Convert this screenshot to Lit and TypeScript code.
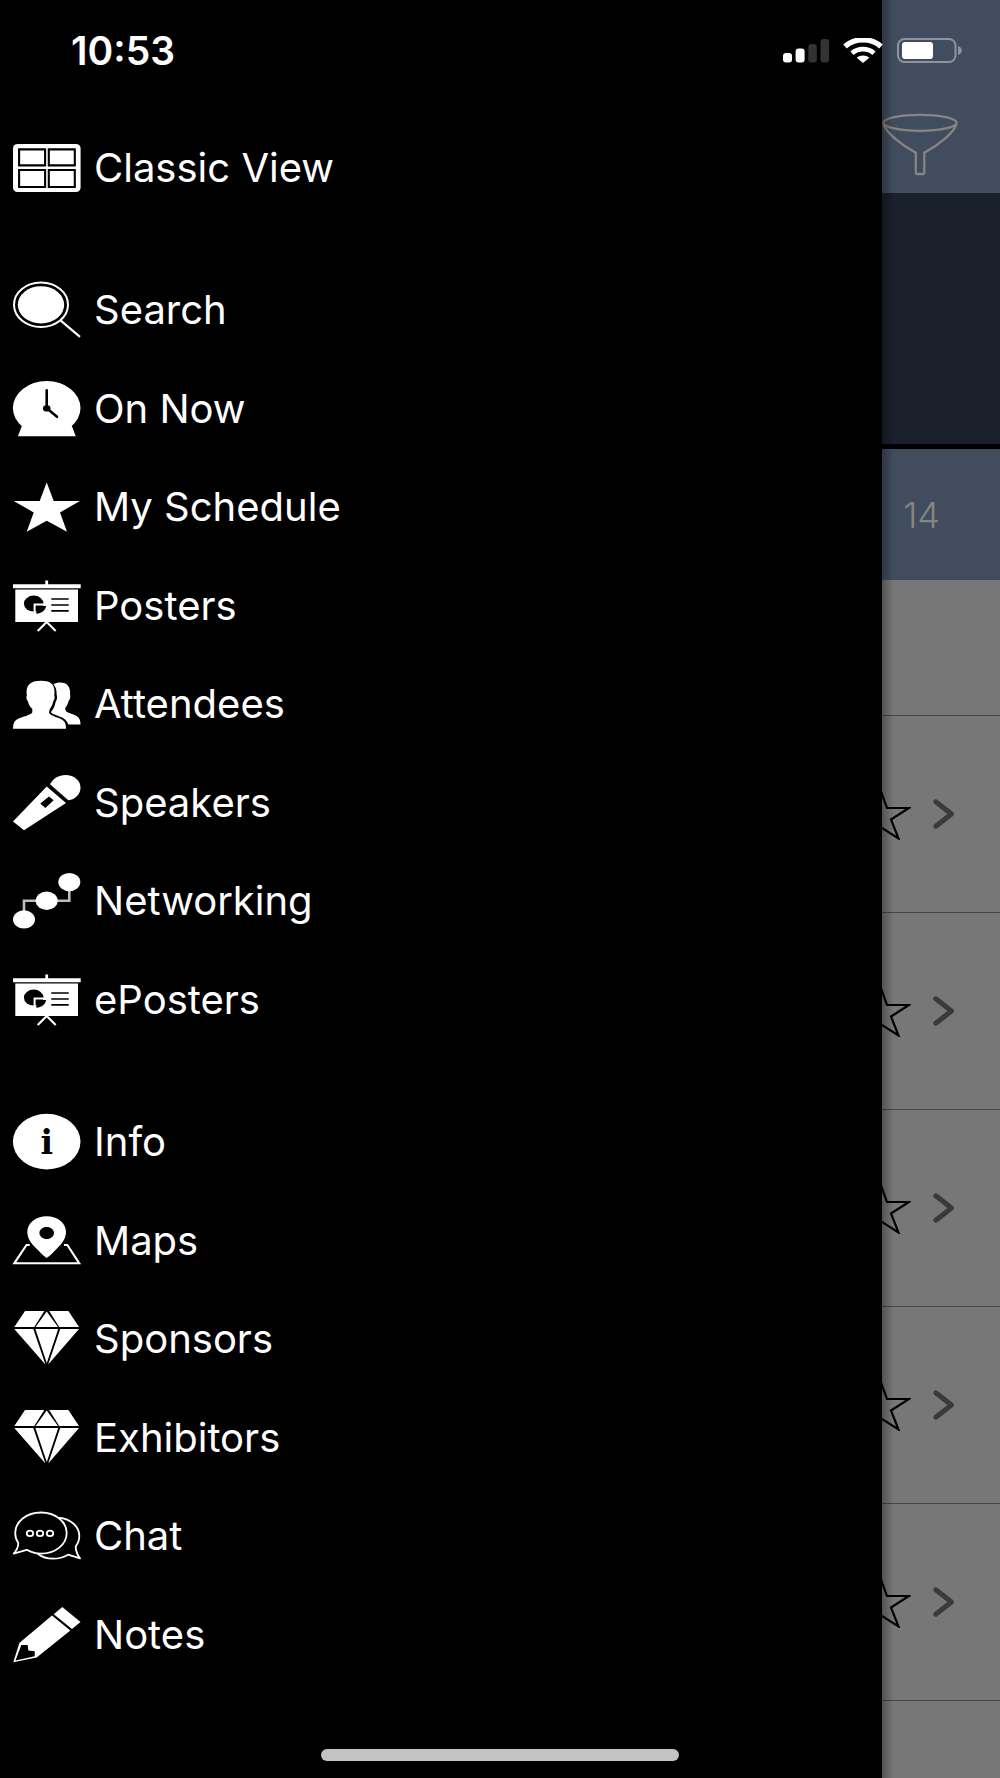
import { LitElement, html, css, svg, SVGTemplateResult } from "lit";
import { customElement, property } from "lit/decorators.js";

const poster = svg`
  <path d="M32.3 2.6h2.8v3.6h32.6v4H0v-4h32.3z" />
  <path d="M2.3 11.6H65v32.3H2.3z" />
  <ellipse cx="20.7" cy="25.6" rx="9.8" ry="8" fill="#000" />
  <path d="M21.6 36.5V26.4h12" fill="none" stroke="#fff" stroke-width="2" />
  <path d="M23.3 28.1h9.8c-.6 4.4-4.6 7.5-9.8 7.7z" fill="#000" />
  <path d="M38.3 21h17.4M38.3 27h17.4M38.3 32.8h17.4" stroke="#000" stroke-width="1.7" />
  <path d="M24.7 53l9-9 9 9" fill="none" stroke="#fff" stroke-width="2.1" />
`;

const diamond = svg`
  <path d="M12 0h19.3l-10 16h-20zM33.7.5L45 16H22.6zM55.4 0H36.2l10 16H66z" />
  <path d="M1.3 18h19L32.4 53.6zM22.4 18h22.8L33.8 52zM66 18H47.2L35.2 53.6z" />
`;

const icons: Record<string, SVGTemplateResult> = {
  grid: svg`
    <rect x="0" y="4" width="67.6" height="48" rx="4.5" />
    <g fill="none" stroke="#000" stroke-width="2.1">
      <path d="M6.1 9.4h26v16h-26zM35.8 9.4h26v16h-26zM6.1 30h26v17h-26zM35.8 30h26v17h-26z" />
    </g>`,
  search: svg`
    <ellipse cx="28" cy="22.8" rx="27" ry="22.2" fill="none" stroke="#fff" stroke-width="2" />
    <ellipse cx="28" cy="22.8" rx="23.2" ry="18.6" />
    <path d="M47.5 38.4L67 54.8" stroke="#fff" stroke-width="2.2" />`,
  clock: svg`
    <ellipse cx="33.7" cy="27" rx="33.8" ry="27" />
    <path d="M8.7 45.2L5 55.2h57.7L59 45.2 34 30z" />
    <path d="M33.7 9.2v18L44 35.8" fill="none" stroke="#000" stroke-width="2.6" stroke-linecap="round" />
    <ellipse cx="33.7" cy="27.4" rx="3.8" ry="3.1" fill="#000" />`,
  star: svg`<path d="M33.7 3.4L40.7 22H67L47 33.4l7 19.3-20.3-10.9-20 10.9 7-19.3L.7 22h26z" />`,
  poster,
  people: svg`
    <path d="M0 52.7c0-7.7 3-9.4 9-11.4 6-2 10.3-3.4 10.3-5.3v-3c-2.3-2-3.8-5-4.5-8-1.3-1-1.8-4-1-5.5C12.5 9 17 4.8 28 4.8S42.5 9 41.3 19.5c.7 1.5.2 4.5-1 5.5-.6 3-1.8 6-3.5 8l-.8 3.5c.5 2 4 3.5 9 5.3 6 2.2 8 4.2 8 10.9z" />
    <path d="M40.5 8.3c2-1.4 4-1.9 6.500-1.900 7.500 0 10.700 4.600 10.100 12 .5 2.600 0 4.800-1.300 6.100-.8 3.300-2 5.700-3.600 7.500.1 3 1 3.800 4.800 5.200 7.500 2.600 10.500 4 10.500 11.300H55.300c-1.800-5-5.300-6.800-10-8.500-3.500-1.400-6.300-2.200-7.500-3.700 2.500-2.500 4.200-6.500 4.800-10.200 1.600-2.600 1.900-5.600 1-7.600.2-4-.9-7.600-3.100-10.200z" />`,
  mic: svg`
    <path d="M37 9.300C40 3.500 45.500 0 52.500 0c8.500 0 15 5.500 15 12.500 0 6.500-5 12-12.200 12.800z" />
    <path fill-rule="evenodd" d="M33.700 11.600L53 28 11 55.300 0 46.600zM36 21.600l-8.700 7 5 4.400 8.400-7.700z" />`,
  network: svg`
    <path d="M11 46V27.800h45.300V9" fill="none" stroke="#bdbdbd" stroke-width="2.6" />
    <ellipse cx="56.3" cy="9.1" rx="11" ry="9.2" />
    <ellipse cx="33.7" cy="27.800" rx="11" ry="9.2" />
    <ellipse cx="11" cy="46.4" rx="11" ry="9.2" />`,
  info: svg`
    <ellipse cx="33.7" cy="27.6" rx="33.8" ry="27.8" />
    <text class="mark" x="33.7" y="40" text-anchor="middle" fill="#000">i</text>`,
  map: svg`
    <path fill-rule="evenodd" d="M33.700 3.300C44.500 3.300 53 10 53 19c0 8.500-7 14.500-11 18.500-2.500 2.500-5 5.500-8.300 7.500-3.300-2-5.800-5-8.300-7.500-4-4-11.100-10-11.100-18.500 0-9 8.600-15.700 19.400-15.700zm0 10.700c-4 0-7.300 2.700-7.300 6s3.300 6 7.300 6 7.300-2.700 7.300-6-3.300-6-7.300-6z" />
    <path d="M16.700 32h-3.200L1.300 50.300h64.900L54.300 32H51" fill="none" stroke="#fff" stroke-width="2.1" />`,
  diamond,
  chat: svg`
    <g fill="none" stroke="#fff" stroke-width="1.8" stroke-linejoin="round">
      <path d="M5.300 35C3.200 32 2.200 28.500 2.200 25 2.200 13.500 13.500 4.500 28 4.500S53.700 13.500 53.700 25 42.500 45.600 28 45.600c-5.200 0-10-1.400-14.300-3.800L.7 45.600C3.500 42.500 5.300 39.500 5.300 35z" />
      <path d="M45.700 9.700C58 11 66.300 18.500 66.300 28c0 3.800-1.200 7.200-3.600 10.400 0 4.600 2 8.800 4.300 12L55 46.700c-4.500 2.700-9.500 4-15 4-5.800 0-11-1.600-15.300-5" />
      <ellipse cx="17" cy="25.4" rx="3.2" ry="2.7" />
      <ellipse cx="27" cy="25.4" rx="3.2" ry="2.7" />
      <ellipse cx="37" cy="25.4" rx="3.2" ry="2.7" />
    </g>`,
  pencil: svg`
    <path d="M49.300 0l18.200 15-8.500 7L40.700 7.300z" />
    <path fill-rule="evenodd" d="M39 8.600l18.300 15-33.600 27L.3 55.300 6.300 36zM8.300 38L2.500 53.500l19.200-4.200v-5l-6.400-.7-.6-5.600z" />`,
};

interface Entry {
  icon: string;
  label: string;
}

const groups: Entry[][] = [
  [{ icon: "grid", label: "Classic View" }],
  [
    { icon: "search", label: "Search" },
    { icon: "clock", label: "On Now" },
    { icon: "star", label: "My Schedule" },
    { icon: "poster", label: "Posters" },
    { icon: "people", label: "Attendees" },
    { icon: "mic", label: "Speakers" },
    { icon: "network", label: "Networking" },
    { icon: "poster", label: "ePosters" },
  ],
  [
    { icon: "info", label: "Info" },
    { icon: "map", label: "Maps" },
    { icon: "diamond", label: "Sponsors" },
    { icon: "diamond", label: "Exhibitors" },
    { icon: "chat", label: "Chat" },
    { icon: "pencil", label: "Notes" },
  ],
];

@customElement("menu-link")
class MenuLink extends LitElement {
  @property() icon = "";
  @property() label = "";

  static styles = css`
    :host {
      display: block;
    }
    .link {
      display: flex;
      align-items: center;
      gap: 13px;
      height: 100%;
      padding-left: 13px;
      color: #fff;
      font-size: 40px;
      line-height: 48px;
      text-decoration: none;
      white-space: nowrap;
    }
    .icon {
      flex: none;
      width: 68px;
      height: 56px;
      fill: #fff;
      overflow: visible;
    }
    .mark {
      font: bold 33px "DejaVu Serif", serif;
    }
  `;

  render() {
    return html`<a class="link" href="#">
      <svg class="icon" viewBox="0 0 68 56" aria-hidden="true">${icons[this.icon]}</svg>
      <span>${this.label}</span>
    </a>`;
  }
}

@customElement("status-bar")
class StatusBar extends LitElement {
  static styles = css`
    :host {
      display: flex;
      align-items: center;
      justify-content: space-between;
      height: 101px;
      padding: 0 37px 0 71px;
      color: #fff;
    }
    .time {
      font-size: 39px;
      font-weight: 600;
      line-height: 48px;
    }
    .signals {
      display: flex;
      align-items: center;
      gap: 14px;
    }
    svg {
      display: block;
    }
  `;

  render() {
    return html`
      <span class="time">10:53</span>
      <div class="signals">
        <svg width="46" height="25" viewBox="0 0 46 25" fill="#fff" aria-hidden="true">
          <rect x="0" y="15" width="9" height="9.5" rx="3" />
          <rect x="12.6" y="10.5" width="9" height="14" rx="3" />
          <rect x="25.3" y="6" width="8.5" height="18.5" rx="3" fill="#333" />
          <rect x="37.5" y="1" width="8.5" height="23.5" rx="3" fill="#333" />
        </svg>
        <svg width="40" height="25" viewBox="0 0 40 25" aria-hidden="true">
          <path d="M2 8.500C12-.4 28-.4 38 8.500" fill="none" stroke="#fff" stroke-width="5.4" />
          <path d="M9 15.200c6-5.400 16-5.400 22 0" fill="none" stroke="#fff" stroke-width="4.8" />
          <path d="M13.700 19.800c3.500-3.200 9.100-3.200 12.600 0L20 25z" fill="#fff" />
        </svg>
        <svg width="66" height="25" viewBox="0 0 66 25" aria-hidden="true">
          <rect x="1" y="1" width="57.5" height="23" rx="6.5" fill="none" stroke="#8d94a0" stroke-width="2" />
          <rect x="5" y="4" width="31" height="17" rx="3" fill="#fff" />
          <path d="M61 8c5 1.500 5 7.500 0 9z" fill="#8d94a0" />
        </svg>
      </div>
    `;
  }
}

@customElement("app-root")
class AppRoot extends LitElement {
  static styles = css`
    :host {
      display: block;
      font-family: Inter, "Liberation Sans", sans-serif;
      font-optical-sizing: none;
    }
    .screen {
      position: relative;
      display: grid;
      grid-template-columns: minmax(0, 1fr) 118px;
      min-height: 100vh;
      background: #000;
    }
    .status {
      position: absolute;
      inset: 0 0 auto;
      pointer-events: none;
    }
    .home {
      position: absolute;
      bottom: 17px;
      left: 50%;
      width: 358px;
      height: 12px;
      border-radius: 6px;
      background: #c4c3c4;
      transform: translateX(-50%);
    }
    .drawer {
      display: flex;
      flex-direction: column;
      gap: 44px;
      padding: 118px 0 94px;
    }
    .group {
      display: grid;
      grid-auto-rows: 1fr;
      margin: 0;
      padding: 0;
      list-style: none;
    }
    .group.single {
      min-height: 99px;
    }
    .group.primary {
      min-height: 788px;
    }
    .group.secondary {
      min-height: 591px;
    }
    .entry {
      display: grid;
    }
    .page {
      position: relative;
      overflow: hidden;
      background: #777;
    }
    .page::after {
      content: "";
      position: absolute;
      inset: 0 auto 0 0;
      width: 12px;
      background: linear-gradient(90deg, rgba(0, 0, 0, 0.3), rgba(0, 0, 0, 0));
      pointer-events: none;
    }
    .toolbar {
      display: flex;
      align-items: flex-end;
      justify-content: flex-end;
      box-sizing: border-box;
      height: 193px;
      padding: 0 42px 17px 0;
      background: #414d5f;
    }
    .banner {
      height: 251px;
      background: #1b202d;
      border-bottom: 5px solid #000;
    }
    .days {
      display: flex;
      align-items: center;
      justify-content: flex-end;
      height: 131px;
      padding-right: 60px;
      background: #414d5f;
    }
    button {
      display: block;
      margin: 0;
      padding: 0;
      border: 0;
      background: none;
      color: #87857f;
      font: inherit;
    }
    .day {
      font-size: 36px;
      font-weight: 300;
      line-height: 44px;
    }
    .section {
      height: 135px;
      border-bottom: 1px solid #464646;
    }
    .session {
      display: flex;
      align-items: center;
      justify-content: flex-end;
      gap: 21px;
      height: 196px;
      padding-right: 44px;
      border-bottom: 1px solid #464646;
    }
    .session > button {
      flex: none;
    }
    svg {
      display: block;
      fill: none;
    }
  `;

  render() {
    const kinds = ["single", "primary", "secondary"];
    return html`
      <div class="screen">
        <nav class="drawer" aria-label="Main menu">
          ${groups.map(
            (group, i) => html`<ul class="group ${kinds[i]}">
              ${group.map(
                (e) => html`<li class="entry"><menu-link icon=${e.icon} label=${e.label}></menu-link></li>`
              )}
            </ul>`
          )}
        </nav>
        <main class="page">
          <header class="toolbar">
            <button aria-label="Filter">
              <svg width="76" height="64" viewBox="0 0 76 64" stroke="#87857f" stroke-width="2.3">
                <ellipse cx="38" cy="10.8" rx="36.5" ry="8" />
                <path d="M1.500 11.500C3 20 20 33.500 33.800 40.800V60.500q0 1.500 1.500 1.500h5.500q1.500 0 1.500-1.500V40.800C56 33.500 73 20 74.500 11.500" />
              </svg>
            </button>
          </header>
          <div class="banner"></div>
          <div class="days"><button class="day">14</button></div>
          <div class="section"></div>
          ${[0, 1, 2, 3, 4].map(
            () => html`<div class="session">
              <button aria-label="Add to schedule">
                <svg width="61" height="52" viewBox="0 0 61 52" stroke="#000" stroke-width="2.2">
                  <path d="M30.500 2L37 20h22L41 31.500l7.500 19L30.500 39l-18 11.500 7.500-19L2 20h22z" />
                </svg>
              </button>
              <button aria-label="Open session">
                <svg width="24" height="32" viewBox="0 0 24 32">
                  <path d="M3.800 3.800L19.500 16 3.800 28.200" stroke="#3a3a3c" stroke-width="5" stroke-linecap="round" stroke-linejoin="round" />
                </svg>
              </button>
            </div>`
          )}
        </main>
        <status-bar class="status"></status-bar>
        <div class="home"></div>
      </div>
    `;
  }
}
